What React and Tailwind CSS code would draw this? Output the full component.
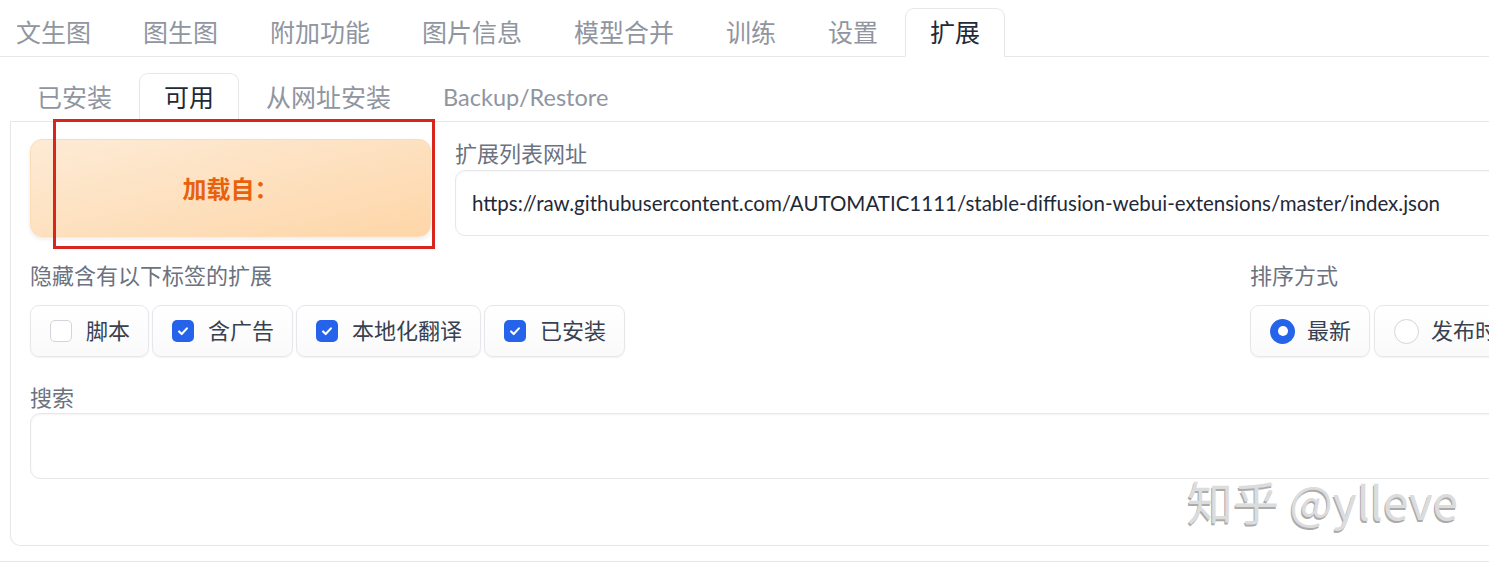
import React from 'react';

const topTabs = ['文生图', '图生图', '附加功能', '图片信息', '模型合并', '训练', '设置', '扩展'];
const subTabs = ['已安装', '可用', '从网址安装', 'Backup/Restore'];

const tags = [
  { label: '脚本', checked: false },
  { label: '含广告', checked: true },
  { label: '本地化翻译', checked: true },
  { label: '已安装', checked: true },
];

const sorts = [
  { label: '最新', checked: true },
  { label: '发布时间', checked: false },
  { label: '首字母', checked: false },
];

const Tab = ({ label, active }) => (
  <div
    className={`h-[49px] px-[24px] flex items-center leading-none -mb-px whitespace-nowrap ${
      /[A-Za-z]/.test(label) ? 'text-[23.5px]' : 'text-[25px]'
    } ${
      active
        ? 'bg-white text-[#1f2937] border border-[#e5e7eb] border-b-white rounded-t-[9px]'
        : 'text-[#9095a0] border border-transparent'
    }`}
  >
    {label}
  </div>
);

const Checkbox = ({ checked }) =>
  checked ? (
    <span className="w-[22px] h-[22px] shrink-0 rounded-[5px] bg-[#2563eb] flex items-center justify-center">
      <svg width="14" height="14" viewBox="0 0 16 16" fill="none">
        <path d="M3.5 8.5l3 3 6-6.5" stroke="white" strokeWidth="2.4" strokeLinecap="round" strokeLinejoin="round" />
      </svg>
    </span>
  ) : (
    <span className="w-[22px] h-[22px] shrink-0 rounded-[5px] bg-white border border-[#d1d5db]" />
  );

const Radio = ({ checked }) =>
  checked ? (
    <span className="w-[25px] h-[25px] shrink-0 rounded-full bg-[#2563eb] flex items-center justify-center">
      <span className="w-[10px] h-[10px] rounded-full bg-white" />
    </span>
  ) : (
    <span className="w-[25px] h-[25px] shrink-0 rounded-full bg-white border border-[#d1d5db]" />
  );

const Chip = ({ children, label, gap = 'gap-[14px]' }) => (
  <div className={`h-[52px] shrink-0 pl-[19px] pr-[18px] flex items-center ${gap} rounded-[9px] border border-[#e5e7eb] bg-gradient-to-b from-white to-[#fafafa] shadow-[0_1px_2px_rgba(0,0,0,0.06)]`}>
    {children}
    <span className="text-[22px] text-[#374151] leading-none whitespace-nowrap">{label}</span>
  </div>
);

export default function App() {
  return (
    <div className="relative w-[1489px] h-[569px] overflow-hidden bg-white font-['Lato','Noto_Sans_CJK_SC',sans-serif]">
      <div className="w-[1700px] pt-[8px]">
        {/* top tabs */}
        <div className="flex gap-[2px] -ml-[9px] border-b border-[#e5e7eb]">
          {topTabs.map(t => (
            <Tab key={t} label={t} active={t === '扩展'} />
          ))}
        </div>

        <div className="pt-[16px] pb-[15px] border-b border-[#e5e7eb]">
          {/* sub tabs */}
          <div className="ml-[10px] flex gap-[2px] pl-[2px] border-b border-[#e5e7eb]">
            {subTabs.map(t => (
              <Tab key={t} label={t} active={t === '可用'} />
            ))}
          </div>

          {/* panel */}
          <div className="ml-[10px] border border-t-0 border-[#e5e7eb] rounded-b-[10px] px-[19px] pt-[16px] pb-[66px]">
            <div className="flex gap-[24px]">
              <button className="w-[401px] h-[98px] mt-[1px] shrink-0 rounded-[12px] border border-[#fcdcb8] bg-gradient-to-br from-[#fdebd6] to-[#fed6a8] shadow-[0_2px_4px_rgba(0,0,0,0.08)] text-[24px] font-bold text-[#e8620e] font-['Noto_Sans_CJK_SC',sans-serif]">
                加载自：
              </button>
              <div className="flex-1">
                <div className="h-[32px] text-[22px] leading-[32px] text-[#6b7280]">扩展列表网址</div>
                <div className="h-[66px] rounded-[10px] border border-[#e5e7eb] bg-white shadow-[inset_0_1px_2px_rgba(0,0,0,0.04)] flex items-center px-[16px]">
                  <span className="text-[20.5px] text-[#1f2937] whitespace-nowrap">
                    https://raw.githubusercontent.com/AUTOMATIC1111/stable-diffusion-webui-extensions/master/index.json
                  </span>
                </div>
              </div>
            </div>

            <div className="flex gap-[20px] mt-[24px]">
              <div className="w-[1200px] shrink-0">
                <div className="h-[30px] text-[22px] leading-[30px] text-[#6b7280]">隐藏含有以下标签的扩展</div>
                <div className="flex gap-[3px] mt-[14px]">
                  {tags.map(t => (
                    <Chip key={t.label} label={t.label}>
                      <Checkbox checked={t.checked} />
                    </Chip>
                  ))}
                </div>
              </div>
              <div className="shrink-0">
                <div className="h-[30px] text-[22px] leading-[30px] text-[#6b7280]">排序方式</div>
                <div className="flex gap-[4px] mt-[14px]">
                  {sorts.map(s => (
                    <Chip key={s.label} label={s.label} gap="gap-[12px]">
                      <Radio checked={s.checked} />
                    </Chip>
                  ))}
                </div>
              </div>
            </div>

            <div className="mt-[26px]">
              <div className="h-[30px] text-[22px] leading-[30px] text-[#6b7280]">搜索</div>
              <div className="h-[66px] rounded-[10px] border border-[#e5e7eb] bg-white shadow-[inset_0_1px_3px_rgba(0,0,0,0.05)]" />
            </div>
          </div>
        </div>
      </div>

      {/* annotation box */}
      <div className="absolute left-[53px] top-[119px] w-[382px] h-[130px] border-[3px] border-[#d7261e]" />

      {/* watermark */}
      <div className="absolute left-[1187px] top-[470px] text-[46px] leading-[60px] text-[#dcdcdc] [text-shadow:-1px_2px_0_#ababab] font-['Noto_Sans_CJK_SC',sans-serif] whitespace-nowrap">
        知乎 @ylleve
      </div>
    </div>
  );
}
